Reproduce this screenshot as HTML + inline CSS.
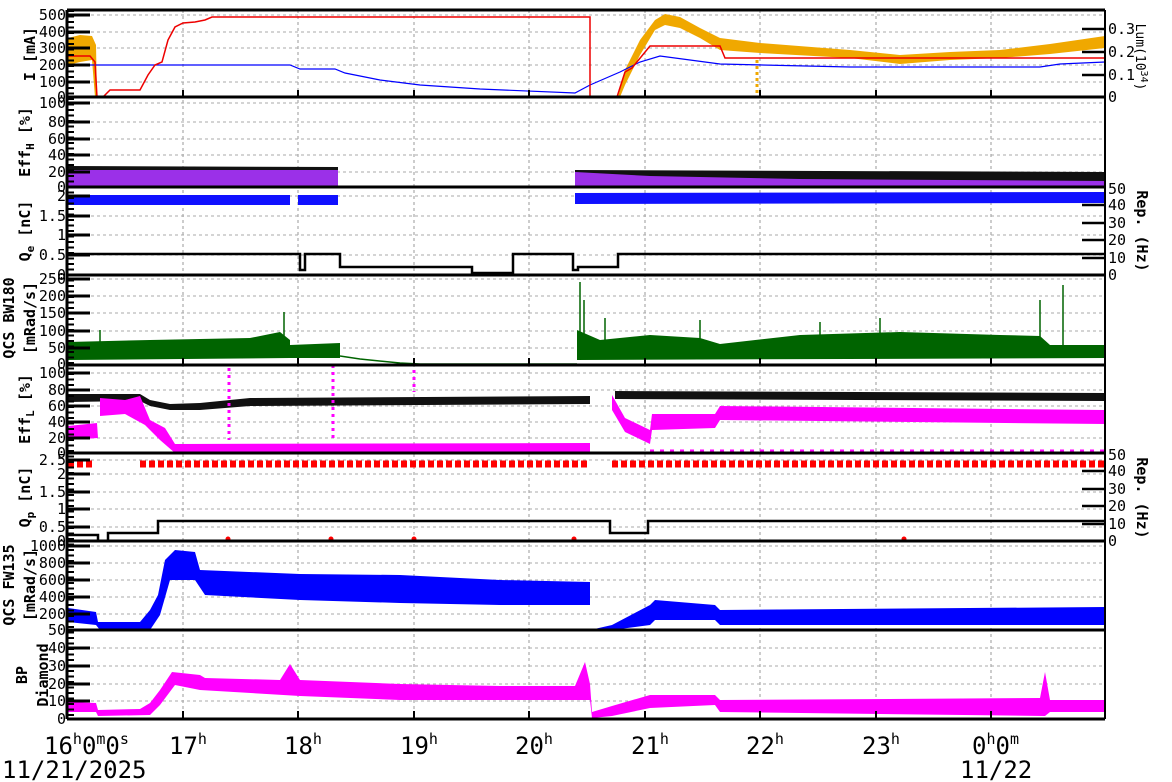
<!DOCTYPE html>
<html><head><meta charset="utf-8"><style>
html,body{margin:0;padding:0;background:#fff;}
svg{display:block;font-family:"DejaVu Sans Mono","Liberation Mono",monospace;}
</style></head><body>
<svg width="1172" height="782" viewBox="0 0 1172 782" xmlns="http://www.w3.org/2000/svg">
<rect width="1172" height="782" fill="#fff"/>
<!-- grid -->
<path d="M183,10V719M298,10V719M414,10V719M529,10V719M645,10V719M760,10V719M876,10V719M991,10V719" stroke="#999" stroke-dasharray="3,3" fill="none"/>
<path d="M67,15H1105M67,32H1105M67,48H1105M67,65H1105M67,82H1105
M67,103H1105M67,122H1105M67,139H1105M67,155H1105M67,172H1105
M67,196H1105M67,216H1105M67,235H1105M67,255H1105
M67,279H1105M67,296H1105M67,313H1105M67,331H1105M67,348H1105
M67,373H1105M67,390H1105M67,406H1105M67,422H1105M67,438H1105
M67,460H1105M67,474H1105M67,492H1105M67,509H1105M67,527H1105
M67,546H1105M67,563H1105M67,580H1105M67,597H1105M67,614H1105
M67,648H1105M67,666H1105M67,684H1105M67,701H1105" stroke="#aaa" stroke-dasharray="3,3" fill="none"/>

<!-- DATA -->
<!-- panel 1 -->
<polygon points="68,38 80,35 92,36 96,45 97,97 95,97 92,60 80,62 68,65" fill="#f0a800"/>
<polygon points="618,97 625,70 640,40 655,20 665,14 680,17 700,28 720,38 760,43 850,50 900,55 950,52 1000,50 1050,44 1105,36 1105,48 1050,54 1000,58 950,60 900,64 850,58 760,53 720,50 700,38 680,28 665,25 655,30 640,55 625,85 620,97" fill="#f0a800"/>
<path d="M757,60V97" stroke="#f0a800" stroke-width="3" stroke-dasharray="3,3"/>
<path d="M68,97H1105" stroke="#f0a800" stroke-width="2"/>
<path d="M68,65H290L300,69H335L345,73L380,80L420,85L480,89L575,93L590,85L620,72L640,62L660,56L690,60L720,64L850,67L1040,67L1060,64L1105,62" stroke="#00f" stroke-width="1.2" fill="none"/>
<path d="M68,56H90L95,62L97,97H103L110,90H140L148,75L155,65L162,62L168,40L175,27L183,23L195,22L205,20L212,17H590V97H617L625,72L632,68L650,46H720L725,58H1105" stroke="#e00" stroke-width="1.5" fill="none"/>
<!-- panel 2 -->
<polygon points="68,166 338,167 338,180 68,180" fill="#111"/>
<polygon points="575,170 1105,172 1105,181 575,181" fill="#111"/>
<polygon points="68,170 338,170 338,187 68,187" fill="#9b30e8"/>
<polygon points="575,172 650,176 800,179 1105,181 1105,187 575,187" fill="#9b30e8"/>
<!-- panel 3 -->
<polygon points="68,195 290,195 290,205 68,205" fill="#1010ff"/>
<polygon points="298,195 338,195 338,205 298,205" fill="#1010ff"/>
<polygon points="575,193 1105,192 1105,203 575,204" fill="#1010ff"/>
<path d="M68,254H300V270H305V254H340V267H472V273H513V254H573V270H578V267H618V254H1105" stroke="#000" stroke-width="2.5" fill="none"/>
<!-- panel 4 -->
<polygon points="68,342 150,340 250,338 280,332 290,340 290,358 68,360" fill="#006400"/>
<polygon points="290,345 340,343 340,358 290,358" fill="#006400"/>
<path d="M340,356L360,359L400,363L420,364H577" stroke="#006400" stroke-width="1.5" fill="none"/>
<polygon points="577,330 600,340 650,335 700,338 720,344 800,335 900,332 1000,335 1040,336 1050,345 1105,345 1105,358 577,360" fill="#006400"/>
<path d="M284,312V345M580,282V360M584,300V350M605,318V345M1040,300V350M1063,285V355M100,330V345M700,320V340M820,322V340M880,318V340" stroke="#006400" stroke-width="1.5"/>
<!-- panel 5 -->
<polygon points="68,394 140,394 150,400 170,404 200,403 250,398 590,396 590,404 250,406 200,410 170,410 150,406 140,401 68,402" fill="#111"/>
<polygon points="615,391 1105,393 1105,401 615,399" fill="#111"/>
<polygon points="68,426 97,423 98,438 68,440" fill="#f0f"/>
<polygon points="100,398 125,400 140,396 150,420 165,428 175,444 590,443 590,452 175,453 160,440 145,425 125,414 100,416" fill="#f0f"/>
<polygon points="612,395 625,418 650,430 652,414 715,414 720,406 1105,410 1105,424 720,420 715,428 652,430 650,444 625,432 612,410" fill="#f0f"/>
<path d="M650,451H1105" stroke="#f0f" stroke-width="3" stroke-dasharray="4,6"/>
<path d="M229,368V440M333,365V440M414,370V392" stroke="#f0f" stroke-width="3" stroke-dasharray="3,4"/>
<!-- panel 6 -->
<path d="M68,464H92M140,464H590M612,464H1105" stroke="#f00" stroke-width="7" stroke-dasharray="6,3"/>
<path d="M68,535H98V541H108V533H158V521H610V533H648V521H1105" stroke="#000" stroke-width="2.5" fill="none"/>
<circle cx="228" cy="539" r="2.5" fill="#f00"/><circle cx="331" cy="539" r="2.5" fill="#f00"/><circle cx="414" cy="539" r="2.5" fill="#f00"/><circle cx="574" cy="539" r="2.5" fill="#f00"/><circle cx="904" cy="539" r="2.5" fill="#f00"/>
<!-- panel 7 -->
<polygon points="68,608 96,612 98,622 140,622 150,610 158,595 165,560 175,550 195,552 200,570 300,574 400,575 500,580 590,582 590,630 612,625 650,605 655,600 715,605 720,610 1105,607 1105,625 720,625 715,620 655,620 650,625 612,630 590,630 590,605 500,605 400,603 300,600 205,595 195,580 170,580 160,615 150,630 100,630 96,625 68,622" fill="#00f"/>
<!-- panel 8 -->
<polygon points="68,702 96,703 98,710 140,709 150,703 160,690 172,672 200,675 205,678 280,680 290,664 300,680 400,684 500,686 575,686 585,662 590,684 592,712 612,706 650,695 715,695 720,700 1040,698 1045,672 1050,700 1105,700 1105,712 1050,712 1045,716 720,712 715,705 650,708 612,716 592,718 590,700 500,700 400,700 300,696 200,690 175,685 160,705 150,715 98,716 96,712 68,712" fill="#f0f"/>

<!-- frame -->
<path d="M67,10H1105M67,97H1105M67,187H1105M67,275H1105M67,365H1105M67,453H1105M67,541H1105M67,630H1105M67,719H1105" stroke="#000" stroke-width="3"/>
<path d="M67,10V719" stroke="#000" stroke-width="3"/>
<path d="M1105,10V719" stroke="#000" stroke-width="2"/>
<path d="M71,10V719" stroke="#000" stroke-width="6" stroke-dasharray="2,3.5"/>
<path d="M67,15H90M67,32H90M67,48H90M67,65H90M67,82H90M67,103H90M67,122H90M67,139H90M67,155H90M67,172H90M67,196H90M67,216H90M67,235H90M67,255H90M67,279H90M67,296H90M67,313H90M67,331H90M67,348H90M67,373H90M67,390H90M67,406H90M67,422H90M67,438H90M67,460H90M67,474H90M67,492H90M67,509H90M67,527H90M67,546H90M67,563H90M67,580H90M67,597H90M67,614H90M67,648H90M67,666H90M67,684H90M67,701H90" stroke="#000" stroke-width="3"/>
<path d="M1082,29H1105M1082,52H1105M1082,75H1105M1082,205H1105M1082,223H1105M1082,240H1105M1082,258H1105M1082,471H1105M1082,489H1105M1082,506H1105M1082,524H1105" stroke="#000" stroke-width="2.5"/>
<path d="M183,90V97M298,90V97M414,90V97M529,90V97M645,90V97M760,90V97M876,90V97M991,90V97M183,358V365M298,358V365M414,358V365M529,358V365M645,358V365M760,358V365M876,358V365M991,358V365M183,711V719M298,711V719M414,711V719M529,711V719M645,711V719M760,711V719M876,711V719M991,711V719" stroke="#000" stroke-width="2"/>

<g font-size="15" fill="#000" text-anchor="end">
<text x="66" y="20">500</text><text x="66" y="37">400</text><text x="66" y="53">300</text><text x="66" y="70">200</text><text x="66" y="87">100</text><text x="66" y="102">0</text>
<text x="66" y="108">100</text><text x="66" y="127">80</text><text x="66" y="144">60</text><text x="66" y="160">40</text><text x="66" y="177">20</text><text x="66" y="192">0</text>
<text x="66" y="201">2</text><text x="66" y="221">1.5</text><text x="66" y="240">1</text><text x="66" y="260">0.5</text><text x="66" y="280">0</text>
<text x="66" y="284">250</text><text x="66" y="301">200</text><text x="66" y="318">150</text><text x="66" y="336">100</text><text x="66" y="353">50</text><text x="66" y="369">0</text>
<text x="66" y="378">100</text><text x="66" y="395">80</text><text x="66" y="411">60</text><text x="66" y="427">40</text><text x="66" y="443">20</text><text x="66" y="458">0</text>
<text x="66" y="465">2.5</text><text x="66" y="479">2</text><text x="66" y="497">1.5</text><text x="66" y="514">1</text><text x="66" y="532">0.5</text><text x="66" y="546">0</text>
<text x="66" y="551">1000</text><text x="66" y="568">800</text><text x="66" y="585">600</text><text x="66" y="602">400</text><text x="66" y="619">200</text><text x="66" y="635">50</text>
<text x="66" y="653">40</text><text x="66" y="671">30</text><text x="66" y="689">20</text><text x="66" y="706">10</text><text x="66" y="724">0</text>
</g>
<g font-size="15" fill="#000">
<text x="1108" y="34">0.3</text><text x="1108" y="57">0.2</text><text x="1108" y="80">0.1</text><text x="1108" y="102">0</text>
<text x="1108" y="194">50</text><text x="1108" y="210">40</text><text x="1108" y="228">30</text><text x="1108" y="245">20</text><text x="1108" y="263">10</text><text x="1108" y="280">0</text>
<text x="1108" y="460">50</text><text x="1108" y="476">40</text><text x="1108" y="494">30</text><text x="1108" y="511">20</text><text x="1108" y="529">10</text><text x="1108" y="546">0</text>
</g>
<g font-size="15" font-weight="bold" fill="#000" text-anchor="middle">
<text transform="translate(35,54) rotate(-90)">I [mA]</text>
<text transform="translate(30,142) rotate(-90)">Eff<tspan font-size="11" dy="4">H</tspan><tspan dy="-4"> [%]</tspan></text>
<text transform="translate(30,231) rotate(-90)">Q<tspan font-size="11" dy="4">e</tspan><tspan dy="-4"> [nC]</tspan></text>
<text transform="translate(14,318) rotate(-90)">QCS BW180</text>
<text transform="translate(35,318) rotate(-90)">[mRad/s]</text>
<text transform="translate(30,409) rotate(-90)">Eff<tspan font-size="11" dy="4">L</tspan><tspan dy="-4"> [%]</tspan></text>
<text transform="translate(30,497) rotate(-90)">Q<tspan font-size="11" dy="4">p</tspan><tspan dy="-4"> [nC]</tspan></text>
<text transform="translate(14,585) rotate(-90)">QCS FW135</text>
<text transform="translate(35,585) rotate(-90)">[mRad/s]</text>
<text transform="translate(27,675) rotate(-90)">BP</text>
<text transform="translate(48,675) rotate(-90)">Diamond</text>
<text transform="translate(1137,231) rotate(90)">Rep. (Hz)</text>
<text transform="translate(1137,498) rotate(90)">Rep. (Hz)</text>
</g>
<text transform="translate(1136,57) rotate(90)" font-size="13" text-anchor="middle">Lum(10<tspan font-size="10" dy="-5">34</tspan><tspan dy="5">)</tspan></text>
<g font-size="24" fill="#000">
<text x="44" y="754">16<tspan font-size="15" dy="-10">h</tspan><tspan dy="10">0</tspan><tspan font-size="15" dy="-10">m</tspan><tspan dy="10">0</tspan><tspan font-size="15" dy="-10">s</tspan></text>
<text x="169" y="754">17<tspan font-size="15" dy="-10">h</tspan></text>
<text x="284" y="754">18<tspan font-size="15" dy="-10">h</tspan></text>
<text x="400" y="754">19<tspan font-size="15" dy="-10">h</tspan></text>
<text x="515" y="754">20<tspan font-size="15" dy="-10">h</tspan></text>
<text x="631" y="754">21<tspan font-size="15" dy="-10">h</tspan></text>
<text x="746" y="754">22<tspan font-size="15" dy="-10">h</tspan></text>
<text x="862" y="754">23<tspan font-size="15" dy="-10">h</tspan></text>
<text x="972" y="754">0<tspan font-size="15" dy="-10">h</tspan><tspan dy="10">0</tspan><tspan font-size="15" dy="-10">m</tspan></text>
<text x="2" y="778">11/21/2025</text>
<text x="960" y="778">11/22</text>
</g>
</svg>
</body></html>
